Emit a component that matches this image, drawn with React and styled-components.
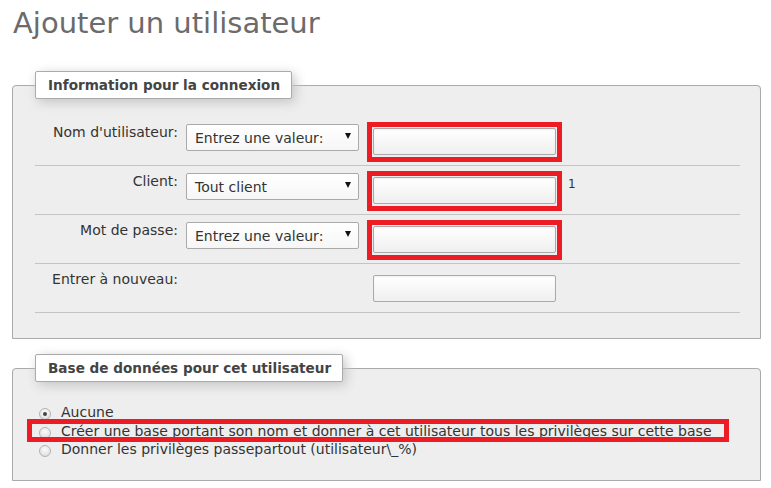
import React from 'react';
import styled, { createGlobalStyle } from 'styled-components';

const Global = createGlobalStyle`
  html, body { margin: 0; padding: 0; background: #fff; }
  body {
    font-family: "DejaVu Sans", Verdana, sans-serif;
    font-size: 14px;
    color: #333;
  }
`;

const Page = styled.div`
  padding: 0 10px 0 12px;
`;

const Title = styled.h2`
  margin: 0;
  padding: 6px 0 0 1px;
  font-weight: normal;
  font-size: 29px;
  line-height: 34px;
  color: #6b6b6b;
`;

const Fieldset = styled.fieldset`
  margin: ${(p) => p.$mt}px 0 0;
  padding: ${(p) => p.$pt}px 20px ${(p) => p.$pb}px 22px;
  border: 1px solid #aaa;
  border-radius: 4px 4px 0 0;
  background: #eee;
  min-width: 0;
`;

const Legend = styled.legend`
  padding: 5px 11px 5px 12px;
  background: #fff;
  border: 1px solid #aaa;
  border-radius: 2px;
  box-shadow: 3px 3px 12px #c4c4c4;
  font-weight: bold;
  font-size: 13.6px;
  line-height: 16px;
  color: #444;
`;

const Row = styled.div`
  display: grid;
  grid-template-columns: 143px 173px 195px auto;
  column-gap: 8px;
  align-items: start;
  padding: 4px 0;
  height: 40px;
  box-sizing: content-box;
  border-bottom: 1px solid #c4c4c4;
`;

const Label = styled.div`
  margin-top: 2px;
  line-height: 18px;
  text-align: right;
  white-space: nowrap;
`;

const Select = styled.div`
  margin-top: 3px;
  height: 27px;
  box-sizing: border-box;
  display: flex;
  align-items: center;
  justify-content: space-between;
  padding: 1px 7px 0 8px;
  border: 1px solid #aaa;
  border-radius: 2px;
  background: linear-gradient(#ffffff, #f6f6f6);
  color: #333;
  white-space: nowrap;
`;

const Arrow = styled.span`
  width: 0;
  height: 0;
  margin-bottom: 4px;
  border-left: 3px solid transparent;
  border-right: 3px solid transparent;
  border-top: 6px solid #111;
`;

const Frame = styled.div`
  grid-column: 3;
  margin-top: 1px;
  padding: 1px 1px 2px 1px;
  border: 5px solid ${(p) => (p.$hl ? '#ed1c24' : 'transparent')};
`;

const TextInput = styled.input`
  display: block;
  width: 183px;
  height: 27px;
  box-sizing: border-box;
  margin: 0;
  border: 1px solid #aaa;
  border-radius: 2px;
  background: linear-gradient(#ffffff 0%, #f7f7f7 50%, #efefef 100%);
  box-shadow: inset 0 1px 2px rgba(0, 0, 0, 0.06);
  font: inherit;
  outline: none;
`;

const Note = styled.div`
  margin-top: 7px;
  margin-left: -2px;
  font-size: 12px;
  line-height: 14px;
  color: #333;
`;

const RadioList = styled.div`
  display: flex;
  flex-direction: column;
`;

const RadioRow = styled.label`
  position: relative;
  display: flex;
  align-items: center;
  height: 18.5px;
  line-height: 18.5px;
  white-space: nowrap;
  color: #333;
`;

const RadioDot = styled.span`
  position: relative;
  flex: none;
  width: 12px;
  height: 12px;
  box-sizing: border-box;
  margin: 4px 10px 0 4px;
  border-radius: 50%;
  border: 1px solid #b4b4b4;
  background: radial-gradient(circle at 50% 35%, #fafafa 0%, #e8e8e8 55%, #d4d4d4 100%);

  &::after {
    content: '';
    display: ${(p) => (p.$checked ? 'block' : 'none')};
    position: absolute;
    left: 3px;
    top: 3px;
    width: 4px;
    height: 4px;
    border-radius: 50%;
    background: #444;
  }
`;

const Highlight = styled.span`
  position: absolute;
  left: -8px;
  right: 11px;
  top: -2.5px;
  bottom: -2px;
  border: 5px solid #ed1c24;
  pointer-events: none;
`;

const fields = [
  { label: "Nom d'utilisateur:", select: 'Entrez une valeur:', hl: true },
  { label: 'Client:', select: 'Tout client', hl: true, note: '1' },
  { label: 'Mot de passe:', select: 'Entrez une valeur:', hl: true },
  { label: 'Entrer à nouveau:', select: null, hl: false },
];

const options = [
  { text: 'Aucune', checked: true },
  {
    text: 'Créer une base portant son nom et donner à cet utilisateur tous les privilèges sur cette base',
    hl: true,
  },
  { text: 'Donner les privilèges passepartout (utilisateur\\_%)' },
];

export default function App() {
  return (
    <>
      <Global />
      <Page>
        <Title>Ajouter un utilisateur</Title>
        <Fieldset $mt={31} $pt={18} $pb={25}>
          <Legend>Information pour la connexion</Legend>
          {fields.map((f) => (
            <Row key={f.label}>
              <Label>{f.label}</Label>
              {f.select && (
                <Select>
                  <span>{f.select}</span>
                  <Arrow />
                </Select>
              )}
              <Frame $hl={f.hl}>
                <TextInput type="text" />
              </Frame>
              {f.note && <Note>{f.note}</Note>}
            </Row>
          ))}
        </Fieldset>
        <Fieldset $mt={15} $pt={21} $pb={21}>
          <Legend>Base de données pour cet utilisateur</Legend>
          <RadioList>
            {options.map((o) => (
              <RadioRow key={o.text}>
                <RadioDot $checked={o.checked} />
                <span>{o.text}</span>
                {o.hl && <Highlight />}
              </RadioRow>
            ))}
          </RadioList>
        </Fieldset>
      </Page>
    </>
  );
}
